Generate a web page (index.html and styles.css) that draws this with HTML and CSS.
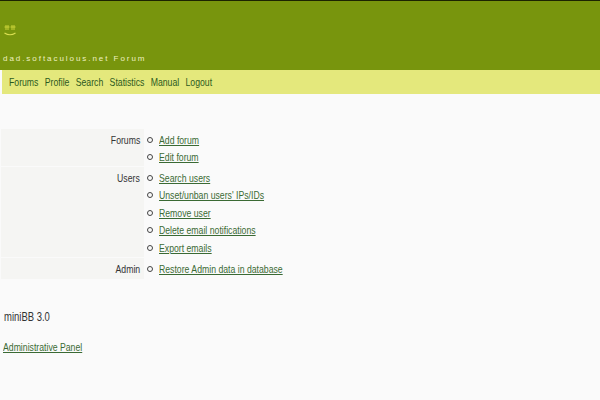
FILE: index.html
```html
<!DOCTYPE html>
<html lang="en">
<head>
<meta charset="utf-8">
<title>Forum</title>
<link rel="stylesheet" href="styles.css">
</head>
<body>
<header class="header">
  <svg class="logo" width="14" height="14" viewBox="0 0 14 14" aria-hidden="true">
    <path d="M3 2v5M5 2v5M9 2v5M11 2v5M1.5 4h5M7.5 4h5" stroke="#c9d238" stroke-width="1" fill="none"/>
    <path d="M1.5 10q5.5 3.5 11 0" stroke="#d9de50" stroke-width="1.2" fill="none"/>
  </svg>
  <div class="site-title">dad.softaculous.net Forum</div>
</header>
<nav class="nav">
  <div class="nav-list">
    <a href="#">Forums</a><a href="#">Profile</a><a href="#">Search</a><a href="#">Statistics</a><a href="#">Manual</a><a href="#">Logout</a>
  </div>
</nav>
<main class="panel">
  <section class="row">
    <div class="label"><span class="cond-r">Forums</span></div>
    <ul class="links"><li><a class="cond" href="#">Add forum</a></li><li><a class="cond" href="#">Edit forum</a></li></ul>
  </section>
  <section class="row">
    <div class="label"><span class="cond-r">Users</span></div>
    <ul class="links"><li><a class="cond" href="#">Search users</a></li><li><a class="cond" href="#">Unset/unban users' IPs/IDs</a></li><li><a class="cond" href="#">Remove user</a></li><li><a class="cond" href="#">Delete email notifications</a></li><li><a class="cond" href="#">Export emails</a></li></ul>
  </section>
  <section class="row row-single">
    <div class="label"><span class="cond-r">Admin</span></div>
    <ul class="links"><li><a class="cond" href="#">Restore Admin data in database</a></li></ul>
  </section>
</main>
<p class="version"><span class="cond">miniBB 3.0</span></p>
<p class="footer-link"><a class="cond" href="#">Administrative Panel</a></p>
</body>
</html>
```
FILE: styles.css
```css
* { box-sizing: border-box; }
html, body { margin: 0; padding: 0; }
body {
  background: #fafafa;
  font-family: "Liberation Sans", Arial, sans-serif;
  font-size: 11px;
  color: #333;
  height: 400px;
  overflow: hidden;
}
a { color: #3a6a34; }
.cond {
  display: inline-block;
  transform: scaleX(.79);
  transform-origin: left center;
  white-space: nowrap;
}
.cond-r {
  display: inline-block;
  transform: scaleX(.79);
  transform-origin: right center;
}
.header {
  height: 70px;
  background: #78950d;
  border-top: 1px solid #1c2400;
  padding: 22px 0 0 3px;
  display: flex;
  flex-direction: column;
}
.logo { display: block; }
.site-title {
  margin-top: 17px;
  font-size: 8px;
  letter-spacing: 1.95px;
  color: #eef0c0;
  line-height: 10px;
}
.nav {
  height: 24px;
  margin-left: 2px;
  background: #e4e87c;
  padding-left: 7px;
  display: flex;
  align-items: center;
}
.nav-list {
  display: flex;
  gap: 8px;
  transform: scaleX(.79);
  transform-origin: left center;
  font-size: 11px;
}
.nav-list a { color: #2c5a1e; text-decoration: none; }
.panel { margin-top: 35px; }
.row { display: flex; margin-bottom: 1px; }
.label {
  width: 143px;
  margin-left: 1px;
  background: #f5f5f3;
  text-align: right;
  padding: 5px 4px 0 0;
  font-size: 11px;
}
.links { list-style: none; margin: 0; padding: 2px 0 0; }
.row-single .links { padding: 3px 0 1px; }
.links li {
  height: 17.5px;
  display: flex;
  align-items: center;
  gap: 6px;
  padding-left: 3px;
  font-size: 11px;
}
.links li::before {
  content: "";
  width: 4px;
  height: 4px;
  border: 1px solid #444;
  border-radius: 50%;
}
.version { margin: 31px 0 0 4px; font-size: 12px; line-height: 14px; }
.footer-link { margin: 16px 0 0 3px; font-size: 11px; line-height: 14px; }
```
